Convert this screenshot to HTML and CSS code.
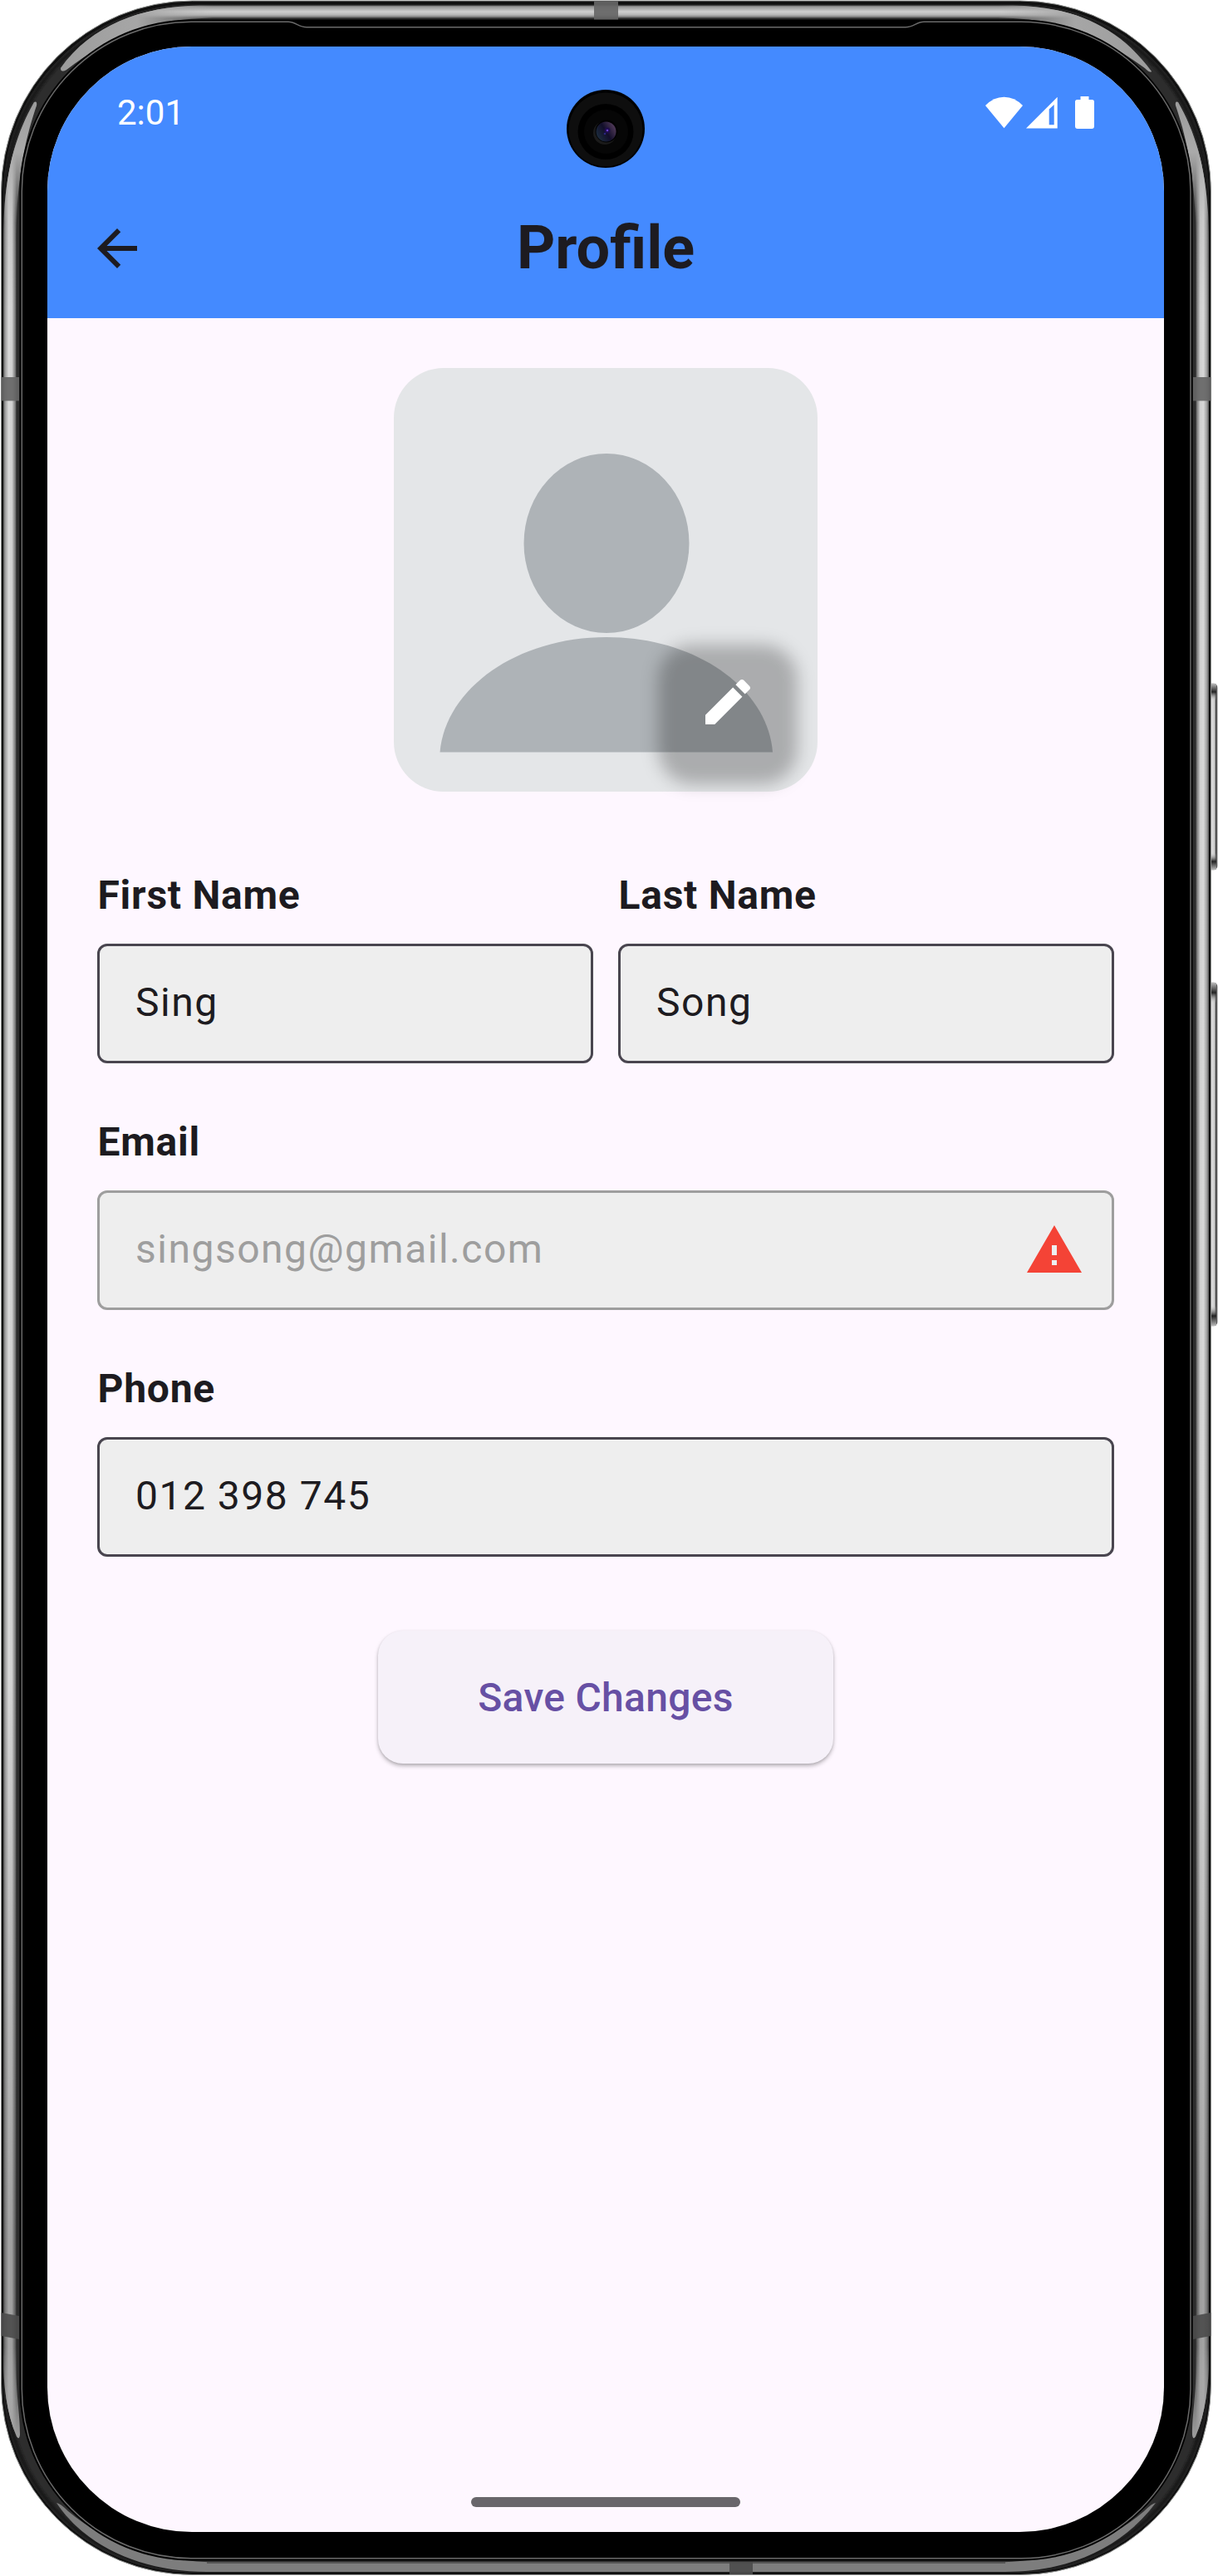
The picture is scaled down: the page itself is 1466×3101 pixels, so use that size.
FILE: index.html
```html
<!DOCTYPE html>
<html lang="en">
<head>
<meta charset="utf-8">
<title>Profile</title>
<link rel="stylesheet" href="styles.css">
</head>
<body>
<div class="device">
  <svg class="bezel" viewBox="0 0 1466 3101" aria-hidden="true">
    <defs>
      <linearGradient id="side" x1="4" x2="20" y1="0" y2="0" gradientUnits="userSpaceOnUse">
        <stop offset="0" stop-color="#555"/><stop offset=".14" stop-color="#9c9c9c"/><stop offset=".4" stop-color="#d8d8d8"/><stop offset=".65" stop-color="#d0d0d0"/><stop offset=".9" stop-color="#777"/><stop offset="1" stop-color="#444"/>
      </linearGradient>
      <linearGradient id="topband" x1="0" x2="0" y1="6" y2="22" gradientUnits="userSpaceOnUse">
        <stop offset="0" stop-color="#555"/><stop offset=".15" stop-color="#999"/><stop offset=".5" stop-color="#cfcfcf"/><stop offset=".75" stop-color="#b5b5b5"/><stop offset="1" stop-color="#555"/>
      </linearGradient>
      <linearGradient id="topTips" x1="73" x2="1386" y1="0" y2="0" gradientUnits="userSpaceOnUse">
        <stop offset="0" stop-color="#9c9c9c"/><stop offset=".07" stop-color="#a6a6a6"/><stop offset=".14" stop-color="#aaa" stop-opacity="0"/><stop offset=".86" stop-color="#aaa" stop-opacity="0"/><stop offset=".93" stop-color="#a6a6a6"/><stop offset="1" stop-color="#9c9c9c"/>
      </linearGradient>
      <linearGradient id="sideTips" x1="0" x2="0" y1="121" y2="2938" gradientUnits="userSpaceOnUse">
        <stop offset="0" stop-color="#9c9c9c"/><stop offset=".022" stop-color="#aaa"/><stop offset=".052" stop-color="#bbb" stop-opacity="0"/><stop offset=".96" stop-color="#bbb" stop-opacity="0"/><stop offset="1" stop-color="#a0a0a0"/>
      </linearGradient>
      <linearGradient id="shade" x1="0" x2="0" y1="0" y2="3101" gradientUnits="userSpaceOnUse">
        <stop offset=".065" stop-color="#000" stop-opacity=".1"/><stop offset=".12" stop-color="#000" stop-opacity="0"/><stop offset=".65" stop-color="#000" stop-opacity="0"/><stop offset=".87" stop-color="#000" stop-opacity=".24"/>
      </linearGradient>
      <linearGradient id="key" x1="1457" x2="1466" y1="0" y2="0" gradientUnits="userSpaceOnUse">
        <stop offset="0" stop-color="#888"/><stop offset=".15" stop-color="#ddd"/><stop offset=".55" stop-color="#ccc"/><stop offset=".75" stop-color="#333"/><stop offset="1" stop-color="#aaa"/>
      </linearGradient>
      <linearGradient id="keyend" x1="0" x2="0" y1="0" y2="1">
        <stop offset="0" stop-color="#bbb"/><stop offset=".5" stop-color="#222"/><stop offset="1" stop-color="#bbb" stop-opacity="0"/>
      </linearGradient>
      <linearGradient id="keyendLow" x1="0" x2="0" y1="1" y2="0">
        <stop offset="0" stop-color="#bbb"/><stop offset=".5" stop-color="#222"/><stop offset="1" stop-color="#bbb" stop-opacity="0"/>
      </linearGradient>
      <filter id="soft" x="-20%" y="-20%" width="140%" height="140%"><feGaussianBlur stdDeviation="1.6"/></filter>
      <path id="sideShape" d="M4 290C4 215 17 165 41 123Q45 121 44 127C30 168 20 215 19.500 290V2700V2850C19.500 2885 24 2905 24 2931Q23 2938 20 2933C8 2905 4 2870 4 2840Z"/>
      <path id="topShape" d="M240 6.500H1219C1290 8 1345 30 1386 86Q1384 88 1378 82C1320 40 1275 22 1200 21.500H260C185 22 135 42 80 84Q73 88 73 82C110 30 170 8 240 6.500Z"/>
    </defs>
    <g fill="url(#key)">
      <rect x="1452" y="822" width="13.500" height="226" rx="6"/>
      <rect x="1452" y="1182" width="13.500" height="415" rx="6"/>
    </g>
    <g fill="url(#keyend)">
      <rect x="1457" y="823" width="7" height="20"/><rect x="1457" y="1183" width="7" height="24"/>
    </g>
    <g fill="url(#keyendLow)">
      <rect x="1457" y="1027" width="7" height="20"/><rect x="1457" y="1572" width="7" height="24"/>
    </g>
    <rect x="1.500" y="1" width="1456" height="3098.500" rx="230" fill="#111" stroke="#8a8c8a"/>
    <rect x="4.500" y="5.500" width="1450" height="3091" rx="226" fill="#2d2d2d"/>
    <rect x="7.500" y="9" width="1444" height="3084" rx="223" fill="none" stroke="#141414" stroke-width="5" filter="url(#soft)"/>
    <use href="#topShape" fill="url(#topband)"/>
    <use href="#topShape" fill="url(#topTips)"/>
    <path fill="#7d7d7d" d="M68 3013Q72 3013 82 3023C130 3063 190 3083.500 260 3084.500H1200C1270 3083.500 1330 3063 1377 3023Q1387 3013 1391 3013C1350 3068 1285 3096 1210 3096H249C174 3096 105 3068 68 3013Z"/>
    <path fill="none" stroke="#555" stroke-width="2" d="M249 3085H1210"/>
    <g id="flank"><use href="#sideShape" fill="url(#side)"/><use href="#sideShape" fill="url(#shade)"/><use href="#sideShape" fill="url(#sideTips)"/></g>
    <use href="#flank" transform="matrix(-1 0 0 1 1459 0)"/>
    <rect x="23.500" y="23.500" width="1412" height="3059" rx="207" fill="#000"/>
    <path fill="none" stroke="#6a6a6a" stroke-width="1.500" d="M230 26.300H347C356 26.300 359 32.700 369 32.700H1090C1100 32.700 1103 26.300 1112 26.300H1229A204 204 0 0 1 1433 230V2876A204 204 0 0 1 1229 3079.700H230A204 204 0 0 1 26.300 2876V230A204 204 0 0 1 230 26.300Z"/>
    <g fill="#666" fill-opacity=".92">
      <rect x="715" y="1.500" width="29" height="22"/>
      <rect x="1.500" y="454" width="21.500" height="28.500"/><rect x="1436" y="454" width="21.500" height="28.500"/>
      <path fill="#4c4c4c" d="M1.500 2784L23 2788V2816L1.500 2812ZM1457.500 2784L1436 2788V2816L1457.500 2812ZM878 3084H906V3099H878Z"/>
    </g>
  </svg>

  <main class="screen">
    <header class="header">
      <div class="status">
        <span class="time">2:01</span>
        <svg class="status-icons" width="132" height="40" viewBox="1186 115 132 40" fill="#fff" aria-hidden="true">
          <path d="M1208.500 153.300L1186 126Q1196 115.700 1208.500 115.700T1231 126Z"/>
          <path fill-rule="evenodd" d="M1235 153.500L1272.700 115.800V153.500ZM1262.700 149.300H1268.700V125L1262.700 130.500Z"/>
          <path d="M1300.500 115H1310.500V119H1314.500Q1317 119 1317 121.500V151Q1317 154 1314 154H1297Q1294 154 1294 151V121.500Q1294 119 1296.500 119H1300.500Z"/>
        </svg>
      </div>
      <div class="appbar">
        <svg class="icon" viewBox="0 0 24 24" aria-label="Back"><path d="M20 11H7.830l5.590-5.590L12 4l-8 8 8 8 1.410-1.410L7.830 13H20v-2z"/></svg>
        <h1 class="title">Profile</h1>
      </div>
      <svg class="camera" viewBox="0 0 94 94" aria-hidden="true">
        <defs>
          <linearGradient id="lens" x1="0" x2="1" y1=".8" y2=".2"><stop offset="0" stop-color="#1d3040"/><stop offset=".5" stop-color="#120e2a"/><stop offset="1" stop-color="#59405f"/></linearGradient>
        </defs>
        <circle cx="47" cy="47" r="47"/><circle cx="47" cy="48" r="44.500" fill="#0e0e0e"/>
        <circle cx="47" cy="50.500" r="33.500"/><circle cx="47.500" cy="50.500" r="26.500" fill="#060606"/>
        <circle cx="46" cy="52" r="14" fill="#1b1b1b"/><circle cx="48" cy="50" r="13.500"/>
        <circle cx="47.500" cy="50.500" r="12" fill="url(#lens)"/>
        <circle cx="49" cy="49" r="3.500" fill="#1e0d4c"/><circle cx="49" cy="49" r="1.300" fill="#6b3fd0"/><circle cx="46" cy="53" r="1.300" fill="#2b2580"/>
      </svg>
    </header>

    <section class="content">
      <div class="avatar">
        <svg class="person" viewBox="0 0 510 510" fill="#aeb3b7" aria-hidden="true">
          <ellipse cx="256" cy="211" rx="99.500" ry="108"/>
          <path d="M55.500 462.500C62 386 148 324 256 324S450 386 456 462.500Z"/>
        </svg>
        <div class="edit">
          <svg class="icon" viewBox="0 0 24 24" aria-label="Edit"><path d="M3 17.250V21H6.750L17.810 9.940 14.060 6.190ZM20.710 7.040C21.100 6.650 21.100 6.020 20.710 5.630L18.370 3.290C17.980 2.900 17.350 2.900 16.960 3.290L15.130 5.120 18.880 8.870Z"/></svg>
        </div>
      </div>

      <div class="form">
        <div class="row">
          <div class="group"><div class="label">First Name</div><div class="field">Sing</div></div>
          <div class="group"><div class="label">Last Name</div><div class="field">Song</div></div>
        </div>
        <div class="group">
          <div class="label">Email</div>
          <div class="field disabled"><span>singsong@gmail.com</span>
            <svg class="icon warning" viewBox="0 0 24 24" aria-label="Warning"><path d="M1 21h22L12 2 1 21zm12-3h-2v-2h2v2zm0-4h-2v-4h2v4z"/></svg>
          </div>
        </div>
        <div class="group"><div class="label">Phone</div><div class="field">012 398 745</div></div>
      </div>

      <div class="save">Save Changes</div>
    </section>
    <div class="home"></div>
  </main>
</div>
</body>
</html>
```
FILE: styles.css
```css
* { box-sizing: border-box; }
body { margin: 0; background: #fff; font-family: Roboto, "Liberation Sans", sans-serif; color: #1d1b20; }
.device { position: relative; width: 1466px; height: 3101px; padding: 56px 0 0 57px; overflow: hidden; }
.bezel { position: absolute; inset: 0; width: 1466px; height: 3101px; }
.screen { position: relative; display: flex; flex-direction: column; width: 1344px; height: 2992px; background: #fef7ff; border-radius: 174px; overflow: hidden; }
.icon { display: block; width: 72px; height: 72px; flex: none; fill: currentColor; }

.header { position: relative; height: 327px; background: #448aff; }
.status { display: flex; justify-content: space-between; align-items: center; height: 159px; padding: 0 83px 0 84px; color: #fff; }
.time { font-size: 42px; line-height: 50px; }
.status-icons { display: block; }
.appbar { display: grid; grid-template-columns: 72px 1fr 72px; align-items: center; height: 168px; padding: 0 48px; }
.title { margin: 0; text-align: center; font-size: 72px; line-height: 84px; font-weight: 700; }
.camera { position: absolute; left: 625px; top: 52px; width: 94px; height: 94px; }

.content { display: flex; flex-direction: column; align-items: center; flex: 1; padding: 60px; }
.avatar { position: relative; width: 510px; height: 510px; border-radius: 60px; background: #e4e6e8; }
.person { display: block; width: 510px; height: 510px; }
.edit { position: absolute; left: 318px; top: 333px; display: flex; align-items: center; justify-content: center; width: 168px; height: 168px; padding-bottom: 30px; color: #fff; }
.edit::before { content: ""; position: absolute; inset: 0; border-radius: 42px; background: rgba(0, 0, 0, .25); filter: blur(10px); }
.edit .icon { position: relative; }

.form { display: flex; flex-direction: column; gap: 66px; width: 100%; margin-top: 96px; }
.row { display: grid; grid-template-columns: 1fr 1fr; gap: 30px; }
.group { display: flex; flex-direction: column; gap: 30px; }
.label { padding-left: .5px; font-size: 48px; line-height: 57px; font-weight: 700; letter-spacing: .75px; }
.field { display: flex; align-items: center; justify-content: space-between; height: 144px; padding: 0 33px 4px 43px; border: 3px solid #49454f; border-radius: 12px; background: #eee; font-size: 48px; letter-spacing: 1.5px; }
.disabled { border-color: #9e9e9e; color: #9e9e9e; }
.warning { margin-top: 4px; color: #f44336; }

.save { display: flex; align-items: center; justify-content: center; width: 548px; height: 160px; margin-top: 89px; padding-top: 1px; border-radius: 30px; background: #f6f1f9; color: #6750a4; font-size: 48px; font-weight: 500; letter-spacing: .3px; box-shadow: 0 3px 5px rgba(0, 0, 0, .25), 0 1px 3px rgba(0, 0, 0, .1); }
.home { align-self: center; width: 324px; height: 12px; margin-bottom: 30px; border-radius: 6px; background: #69666b; }
```
